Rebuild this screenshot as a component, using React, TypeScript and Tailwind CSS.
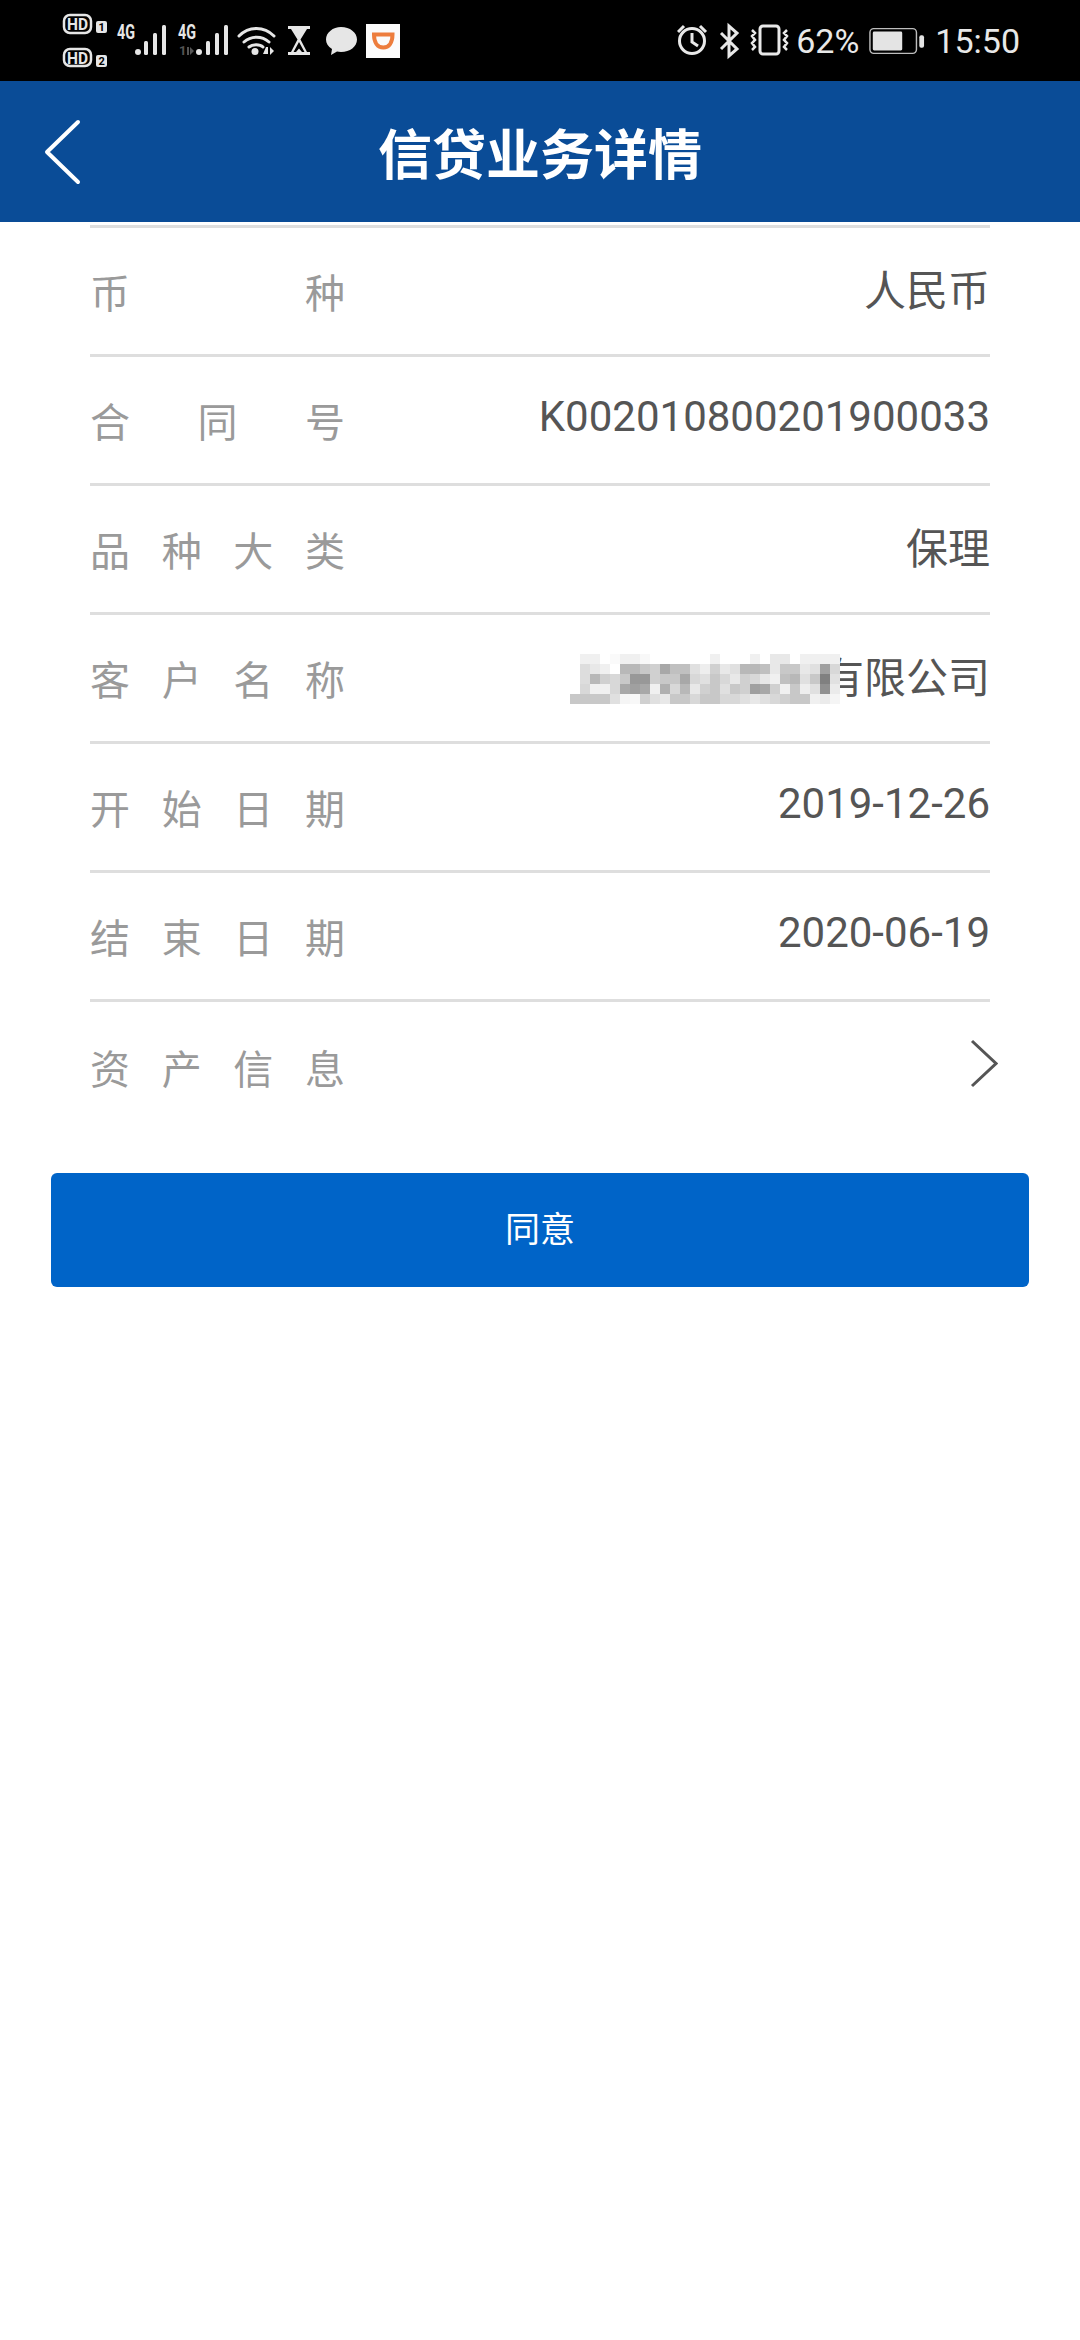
const rows = [
  { label: ['币', '种'], value: '人民币' },
  { label: ['合', '同', '号'], value: 'K002010800201900033', numeric: true },
  { label: ['品', '种', '大', '类'], value: '保理' },
  { label: ['客', '户', '名', '称'], value: '有限公司', masked: true },
  { label: ['开', '始', '日', '期'], value: '2019-12-26', numeric: true },
  { label: ['结', '束', '日', '期'], value: '2020-06-19', numeric: true },
];

// grey level of each mosaic block over the customer name
const mosaic = [
  [255, 240, 240, 255, 250, 240, 240, 248, 255, 255, 255, 255, 255, 255, 240, 255, 255, 255, 240, 255, 232, 232, 255, 240, 240, 240, 240],
  [255, 221, 232, 240, 255, 184, 184, 200, 208, 168, 192, 192, 224, 238, 208, 232, 224, 184, 184, 192, 232, 200, 200, 232, 224, 160, 216],
  [255, 221, 184, 208, 216, 200, 152, 152, 208, 200, 200, 168, 216, 224, 200, 216, 232, 208, 216, 232, 240, 192, 184, 224, 200, 128, 225],
  [255, 216, 240, 240, 216, 168, 160, 168, 240, 176, 216, 184, 232, 208, 200, 224, 200, 208, 160, 168, 208, 240, 200, 238, 224, 144, 235],
  [200, 200, 200, 200, 224, 245, 248, 208, 224, 232, 200, 200, 216, 200, 200, 216, 216, 224, 232, 224, 216, 208, 200, 200, 240, 235, 245],
];

function StatusLeft() {
  return (
    <svg width="410" height="81" viewBox="0 0 410 81" className="shrink-0">
      <g fontFamily="Roboto, sans-serif" fontWeight="700" fill="#e6e6e6">
        <rect x="64" y="15" width="27" height="18" rx="6" fill="none" stroke="#e6e6e6" strokeWidth="2.5" />
        <text x="67" y="29.500" fontSize="16" textLength="21" lengthAdjust="spacingAndGlyphs">HD</text>
        <rect x="96" y="21" width="11" height="12" rx="2" />
        <text x="98.500" y="31" fontSize="11" fill="#000">1</text>
        <rect x="64" y="49" width="27" height="17" rx="6" fill="none" stroke="#e6e6e6" strokeWidth="2.5" />
        <text x="67" y="63.500" fontSize="16" textLength="21" lengthAdjust="spacingAndGlyphs">HD</text>
        <rect x="96" y="55" width="11" height="12" rx="2" />
        <text x="98.500" y="65" fontSize="11" fill="#000">2</text>
        <text x="117" y="38.500" fontSize="20" textLength="18" lengthAdjust="spacingAndGlyphs">4G</text>
        <text x="178" y="38.500" fontSize="20" textLength="18" lengthAdjust="spacingAndGlyphs">4G</text>
        <text x="179" y="55" fontSize="13" fill="#555">1</text>
      </g>
      <g fill="#e6e6e6">
        <circle cx="138" cy="52" r="3" />
        <rect x="144" y="41" width="4" height="14" rx="1.5" />
        <rect x="153" y="33" width="4" height="22" rx="1.5" />
        <rect x="162" y="25" width="4" height="30" rx="1.5" />
        <path d="M187 47h2v8h-2zM190 47l4 4-4 4z" fill="#555" />
        <circle cx="199" cy="52" r="3" />
        <rect x="206" y="41" width="4" height="14" rx="1.5" />
        <rect x="215" y="33" width="4" height="22" rx="1.5" />
        <rect x="224" y="25" width="4" height="30" rx="1.5" />
        <circle cx="255" cy="51.5" r="3.5" />
        <path d="M263 54l3-7h2v7zM270 47l4 4-4 4z" />
        <path d="M288 26h22v3h-3l-6.500 10.500L307 52h3v3h-22v-3h3l6.500-12.500L291 29h-3z" />
        <path d="M341 27c9 0 16 5.500 16 12.500S350 52 341 52c-1.500 0-3-.2-4-.5l-6 3.500 1-6c-4-2.500-6-5.500-6-9.500 0-7 7-12.500 15-12.500z" />
      </g>
      <path d="M293.500 52l5.500-10 5.500 10h-2.500l-3-3.500-3 3.500z" fill="#000" />
      <g fill="none" stroke="#e6e6e6" strokeWidth="3" strokeLinecap="round">
        <path d="M239 36c10-10 25-10 35 0" />
        <path d="M244 42c7-6.500 18-6.500 25 0" />
        <path d="M249 47c3.500-3 11-3 14 0" />
      </g>
      <rect x="366" y="24" width="34" height="34" fill="#fbfbfb" />
      <path d="M374 34.500h18.500c0 8-3.500 13-9.200 13s-9.300-5-9.300-13z" fill="none" stroke="#ed7d3d" strokeWidth="4" />
    </svg>
  );
}

function StatusRight() {
  return (
    <div className="flex items-center pr-[60px] h-[81px] text-[#e8e8e8] text-[34px] font-['Roboto',sans-serif]">
      <svg width="119" height="81" viewBox="677 0 119 81" className="shrink-0">
        <g fill="none" stroke="#e8e8e8" strokeWidth="3">
          <circle cx="692" cy="41" r="12.500" />
          <path d="M692 33v9l6 4" />
          <path d="M678 32l6-6M706 32l-6-6" />
          <path d="M721 33l16 16-8 7V26l8 7-16 16" />
          <rect x="760" y="26" width="19" height="28" rx="3" />
          <path d="M752 30l3 3-3 3 3 4-3 3 3 4-3 3M787 30l-3 3 3 3-3 4 3 3-3 4 3 3" strokeWidth="2.500" />
        </g>
      </svg>
      <span className="leading-none">62%</span>
      <svg width="56" height="30" viewBox="0 0 59 30" className="ml-[10px] shrink-0">
        <rect x="1" y="2" width="49" height="26" rx="4" fill="none" stroke="#bdbdbd" strokeWidth="1.500" />
        <rect x="4" y="5" width="31" height="20" rx="1.500" fill="#e4e4e4" />
        <rect x="53" y="9" width="5" height="13" rx="2" fill="#e4e4e4" />
      </svg>
      <span className="ml-[10px] leading-none">15:50</span>
    </div>
  );
}

export default function App() {
  return (
    <div className="w-[1080px] h-[2340px] bg-white font-['Roboto','Noto_Sans_CJK_SC',sans-serif]">
      <div className="flex items-center justify-between h-[81px] bg-black">
        <StatusLeft />
        <StatusRight />
      </div>

      <div className="relative flex items-center justify-center h-[141px] bg-[#0a4c97]">
        <svg width="38" height="66" viewBox="0 0 38 66" className="absolute left-[44px] top-[38px]">
          <path d="M34 3 3 33l31 30" fill="none" stroke="#fff" strokeWidth="4" strokeLinecap="round" strokeLinejoin="round" />
        </svg>
        <h1 className="text-[54px] leading-none font-bold text-white font-['Noto_Sans_CJK_SC',sans-serif]">信贷业务详情</h1>
      </div>

      <div className="mt-[3px] mx-[90px] border-t-[3px] border-[#dedede]">
        {rows.map((row) => (
          <div key={row.value} className="relative flex items-center justify-between h-[129px] border-b-[3px] border-[#dedede]">
            <div className="flex justify-between w-[255px] text-[40px] leading-none text-[#9a9a9a] font-['Noto_Sans_CJK_SC',sans-serif]">
              {row.label.map((ch) => <span key={ch}>{ch}</span>)}
            </div>
            <span className={row.numeric ? 'mb-[6px] text-[42px] leading-none text-[#555]' : 'mt-[2px] text-[42px] leading-none text-[#555]'}>{row.value}</span>
            {row.masked && (
              <svg width="270" height="50" viewBox="0 0 270 50" className="absolute left-[480px] top-[39px]">
                {mosaic.map((line, y) =>
                  line.map((g, x) => <rect key={`${x}-${y}`} x={x * 10} y={y * 10} width="10" height="10" fill={`rgb(${g},${g},${g})`} />)
                )}
              </svg>
            )}
          </div>
        ))}
        <div className="flex items-center justify-between h-[129px]">
          <div className="flex justify-between w-[255px] text-[40px] leading-none text-[#9a9a9a] font-['Noto_Sans_CJK_SC',sans-serif]">
            <span>资</span><span>产</span><span>信</span><span>息</span>
          </div>
          <svg width="28" height="50" viewBox="0 0 28 50" className="-mr-[8px] mb-[6px] shrink-0">
            <path d="M2 2l24 22.500L2 47" fill="none" stroke="#555" strokeWidth="3" />
          </svg>
        </div>
      </div>

      <div className="mx-[51px] mt-[42px] flex items-center justify-center h-[114px] pb-[5px] rounded-[6px] bg-[#0064c8] text-[35px] text-white font-['Noto_Sans_CJK_SC',sans-serif]">
        同意
      </div>
    </div>
  );
}
